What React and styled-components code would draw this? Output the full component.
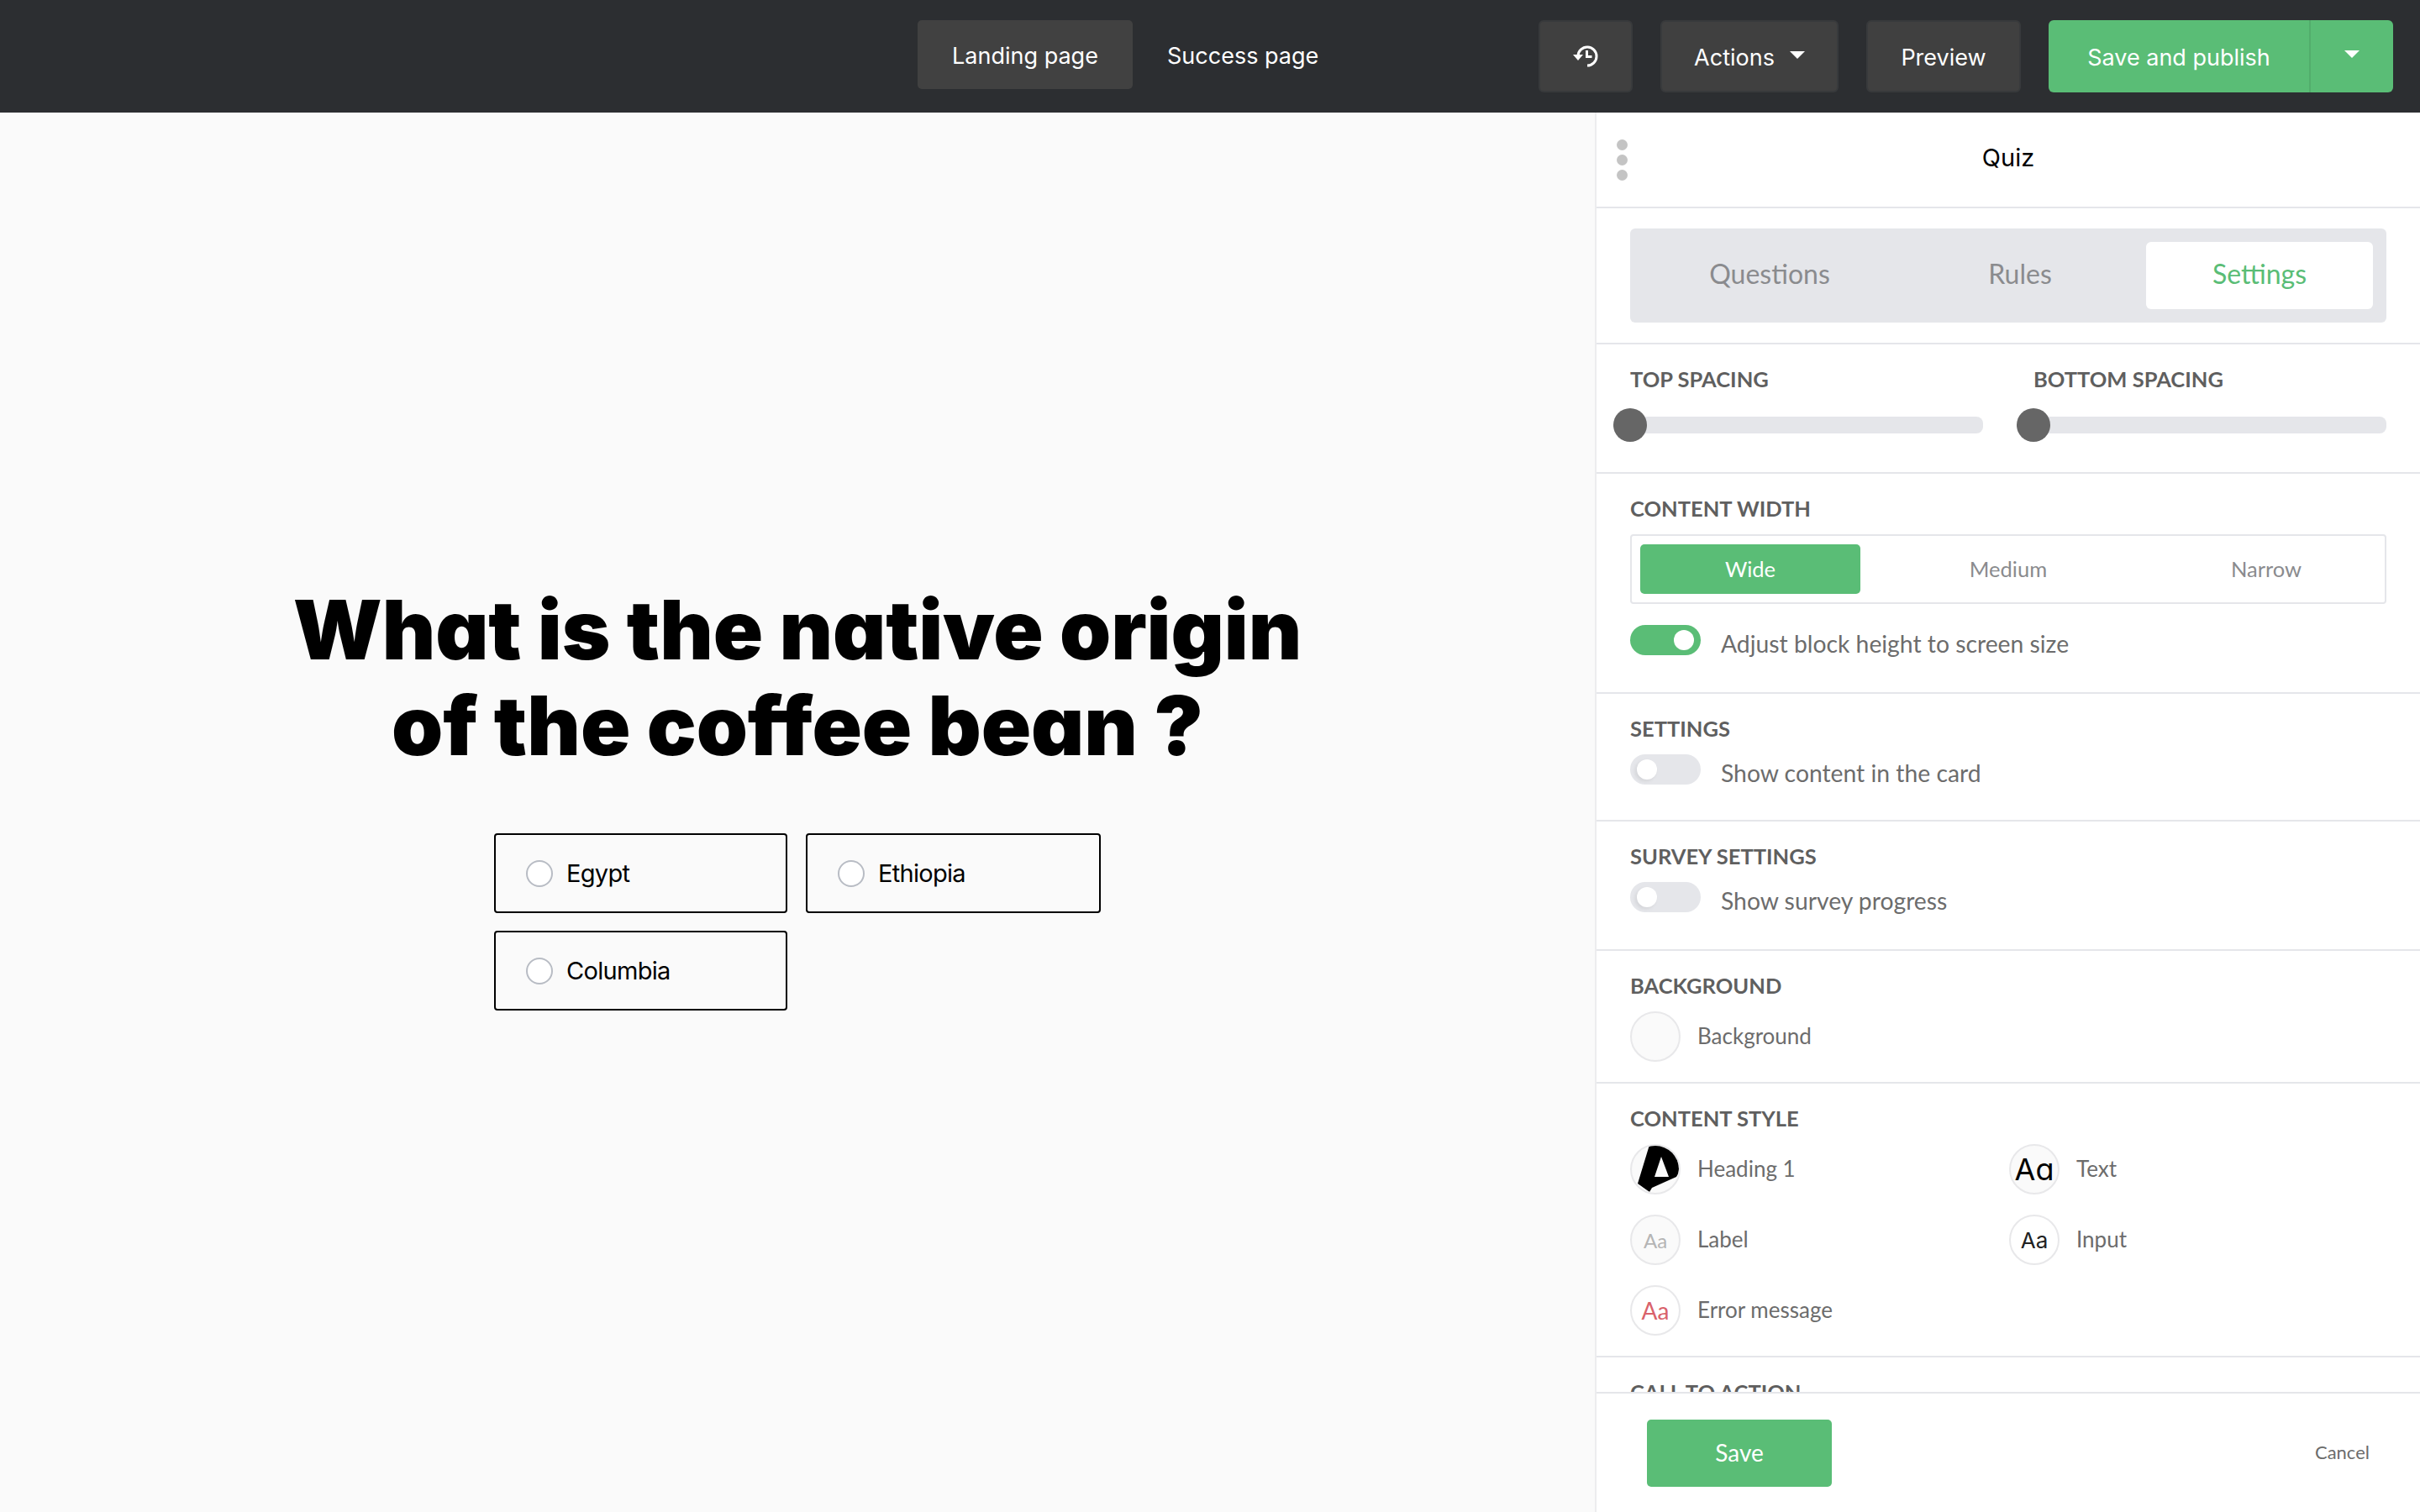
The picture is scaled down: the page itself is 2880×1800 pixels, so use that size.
import React from 'react'
import styled, { createGlobalStyle } from 'styled-components'

const GlobalStyle = createGlobalStyle`
  html, body { margin: 0; padding: 0; background: #fafafa; }
  * { box-sizing: border-box; }
`

const Page = styled.div`
  width: 2880px;
  height: 1800px;
  display: flex;
  flex-direction: column;
  overflow: hidden;
  font-family: Inter, "Liberation Sans", sans-serif;
`

const TopBar = styled.header`
  height: 134px;
  flex: none;
  background: #2c2e31;
  display: flex;
  padding: 24px 32px 0 1092px;
  color: #fff;
`

const PageTabs = styled.nav`
  display: flex;
  gap: 10px;
  margin-right: auto;
`

const PageTab = styled.div`
  width: ${(p) => (p.$active ? '256px' : '220px')};
  height: 82px;
  border-radius: 5px;
  background: ${(p) => (p.$active ? '#414141' : 'transparent')};
  display: flex;
  align-items: center;
  justify-content: ${(p) => (p.$active ? 'center' : 'flex-start')};
  padding: 3px 0 0 ${(p) => (p.$active ? '0' : '31px')};
  font-size: 27px;
`

const BarActions = styled.div`
  display: flex;
  gap: 33px;
`

const DarkButton = styled.div`
  width: ${(p) => p.$w}px;
  height: 86px;
  border-radius: 6px;
  background: #404040;
  border: 2px solid #383a3c;
  display: flex;
  align-items: center;
  justify-content: center;
  gap: 18px;
  padding-top: 2px;
  font-size: 27px;
`

const Caret = styled.span`
  width: 0;
  height: 0;
  border-left: 9px solid transparent;
  border-right: 9px solid transparent;
  border-top: 9px solid #fff;
  margin-bottom: 6px;
`

const PublishButton = styled.div`
  width: 410px;
  height: 86px;
  border-radius: 6px;
  background: #5abd76;
  display: flex;
  font-size: 27px;
`

const PublishLabel = styled.div`
  width: 312px;
  display: flex;
  align-items: center;
  justify-content: center;
  border-right: 2px solid #52ad6c;
  padding-top: 2px;
`

const PublishCaret = styled.div`
  flex: 1;
  display: flex;
  align-items: center;
  justify-content: center;
`

const Body = styled.div`
  flex: 1;
  display: flex;
  min-height: 0;
`

const Canvas = styled.main`
  flex: 1;
  background: #fafafa;
  display: flex;
  flex-direction: column;
  align-items: center;
  padding-top: 559px;
`

const Question = styled.h1`
  margin: 0;
  font-family: Inter, sans-serif;
  font-weight: 900;
  font-size: 98px;
  line-height: 114px;
  color: #000;
  text-align: center;
  letter-spacing: -0.1px;
  font-feature-settings: 'cv11';
`

const Options = styled.div`
  display: grid;
  grid-template-columns: 349px 351px;
  gap: 21px 22px;
  margin-top: 71px;
`

const Option = styled.div`
  height: 95px;
  border: 2px solid #000;
  border-radius: 4px;
  display: flex;
  align-items: center;
  gap: 16px;
  padding-left: 36px;
  font-size: 29px;
  letter-spacing: -0.7px;
  color: #000;
`

const Radio = styled.span`
  width: 32px;
  height: 32px;
  border-radius: 50%;
  border: 2px solid #b8bcc4;
  background: #fff;
`

const Panel = styled.aside`
  width: 982px;
  flex: none;
  background: #fff;
  border-left: 2px solid #ececee;
  display: flex;
  flex-direction: column;
  font-family: Lato, "Open Sans", sans-serif;
  min-height: 0;
`

const PanelHead = styled.div`
  height: 114px;
  flex: none;
  position: relative;
  display: flex;
  align-items: center;
  justify-content: center;
  border-bottom: 2px solid #e5e6ea;
  font-family: Inter, sans-serif;
  font-size: 29px;
  color: #000;
  padding-bottom: 6px;
`

const DragDots = styled.div`
  position: absolute;
  left: 24px;
  top: 32px;
  display: flex;
  flex-direction: column;
  gap: 5px;

  span {
    width: 13px;
    height: 13px;
    border-radius: 50%;
    background: #c4c4c4;
  }
`

const PanelScroll = styled.div`
  flex: 1;
  min-height: 0;
  overflow: hidden;
`

const Section = styled.section`
  padding: ${(p) => p.$top ?? 27}px 40px ${(p) => p.$bottom ?? 24}px 40px;
  border-bottom: 2px solid #e5e6ea;
`

const ModeTabs = styled.div`
  height: 112px;
  background: #e5e6ea;
  border-radius: 6px;
  display: grid;
  grid-template-columns: 332px 264px 288px;
  align-items: center;
  font-size: 32px;
`

const ModeTab = styled.div`
  height: 80px;
  border-radius: 6px;
  display: flex;
  align-items: center;
  justify-content: center;
  padding-bottom: 6px;
  color: ${(p) => (p.$active ? '#5abd76' : '#8a8b8e')};
  background: ${(p) => (p.$active ? '#fff' : 'transparent')};
  margin-left: ${(p) => (p.$active ? '18px' : '0')};
`

const Label = styled.div`
  font-size: 25.5px;
  font-weight: 700;
  line-height: 28px;
  color: #5f5f5f;
  text-transform: uppercase;
`

const SliderRow = styled.div`
  display: grid;
  grid-template-columns: 420px 420px;
  gap: 60px;
`

const SliderTrack = styled.div`
  height: 20px;
  margin: 31px 0 10px;
  background: #e5e6ea;
  border-radius: 8px;
  position: relative;
`

const SliderThumb = styled.span`
  position: absolute;
  left: -20px;
  top: -10px;
  width: 40px;
  height: 40px;
  border-radius: 50%;
  background: #666;
`

const Segments = styled.div`
  height: 83px;
  margin-top: 17px;
  border: 2px solid #e5e6ea;
  border-radius: 4px;
  display: grid;
  grid-template-columns: repeat(3, 1fr);
  gap: 45px;
  padding: 10px;
  font-size: 25.5px;
`

const Segment = styled.div`
  border-radius: 5px;
  display: flex;
  align-items: center;
  justify-content: center;
  padding-bottom: 2px;
  color: ${(p) => (p.$active ? '#fff' : '#8a8b8e')};
  background: ${(p) => (p.$active ? '#5abd76' : 'transparent')};
`

const ToggleRow = styled.div`
  display: flex;
  align-items: flex-start;
  gap: 24px;
  margin-top: ${(p) => p.$mt}px;
  font-size: 28.3px;
  color: #6c6c6c;
`

const ToggleText = styled.span`
  line-height: 36px;
  margin-top: 4px;
`

const Toggle = styled.span`
  width: 84px;
  height: 36px;
  flex: none;
  border-radius: 18px;
  background: ${(p) => (p.$on ? '#5abd76' : '#e5e6ea')};
  position: relative;

  &::after {
    content: '';
    position: absolute;
    top: 6px;
    ${(p) => (p.$on ? 'right: 8px;' : 'left: 8px;')}
    width: 24px;
    height: 24px;
    border-radius: 50%;
    background: #fff;
    box-shadow: ${(p) => (p.$on ? 'none' : '-2px 2px 4px rgba(0, 0, 0, 0.08)')};
  }
`

const SwatchGrid = styled.div`
  display: grid;
  grid-template-columns: 451px 1fr;
  row-gap: 24px;
  margin-top: 17px;
`

const SwatchItem = styled.div`
  display: flex;
  align-items: center;
  gap: 20px;
  font-size: 26px;
  color: #6c6c6c;
  ${(p) => p.$spaced && 'margin-top: 17px;'}
`

const SwatchName = styled.span`
  padding-bottom: 3px;
`

const Swatch = styled.div`
  width: 60px;
  height: 60px;
  flex: none;
  border-radius: 50%;
  border: 2px solid #e8e8ea;
  background: ${(p) => p.$bg || '#fff'};
  color: ${(p) => p.$color || '#000'};
  font-size: ${(p) => p.$size || 26}px;
  font-family: ${(p) => p.$font || 'Lato, sans-serif'};
  font-feature-settings: ${(p) => (p.$round ? "'cv11'" : 'normal')};
  display: flex;
  align-items: center;
  justify-content: center;
  position: relative;
  overflow: hidden;
`

const PanelFoot = styled.footer`
  height: 143px;
  flex: none;
  background: #fff;
  border-top: 2px solid #e5e6ea;
  display: flex;
  align-items: center;
  justify-content: space-between;
  padding: 0 60px;
`

const SaveButton = styled.div`
  width: 220px;
  height: 80px;
  border-radius: 5px;
  background: #5abd76;
  color: #fff;
  font-size: 28px;
  display: flex;
  align-items: center;
  justify-content: center;
  padding-bottom: 2px;
`

const CancelLink = styled.div`
  font-size: 22px;
  color: #6c6c6c;
  padding-bottom: 2px;
`

const IconSvg = styled.svg`
  margin-bottom: 3px;
`

const HistoryIcon = () => (
  <IconSvg width="30" height="26" viewBox="0 0 30 26" fill="none" stroke="#fff" strokeWidth="3">
    <path d="M6 12.5A11 11 0 1 1 17 24" />
    <path d="M0 11h12l-6 7z" fill="#fff" stroke="none" />
    <path d="M16.5 6v7.5h6" />
  </IconSvg>
)

const GlyphLayer = styled.svg`
  position: absolute;
  left: -2px;
  top: -2px;
`

const HeadingGlyph = () => (
  <GlyphLayer width="60" height="60" viewBox="0 0 60 60">
    <path
      fillRule="evenodd"
      d="M23 1 H32 C47 1 58 13 58 29 C58 33 57 36 55 39 L26 52 L23 57 L9 47 Z M37 15 L29 39 H46 Z"
      fill="#000"
    />
  </GlyphLayer>
)

const App = () => (
  <Page>
    <GlobalStyle />
    <TopBar>
      <PageTabs>
        <PageTab $active>Landing page</PageTab>
        <PageTab>Success page</PageTab>
      </PageTabs>
      <BarActions>
        <DarkButton $w={112}><HistoryIcon /></DarkButton>
        <DarkButton $w={212}>Actions <Caret /></DarkButton>
        <DarkButton $w={184}>Preview</DarkButton>
        <PublishButton>
          <PublishLabel>Save and publish</PublishLabel>
          <PublishCaret><Caret /></PublishCaret>
        </PublishButton>
      </BarActions>
    </TopBar>
    <Body>
      <Canvas>
        <Question>What is the native origin<br />of the coffee bean ?</Question>
        <Options>
          <Option><Radio />Egypt</Option>
          <Option><Radio />Ethiopia</Option>
          <Option><Radio />Columbia</Option>
        </Options>
      </Canvas>
      <Panel>
        <PanelHead>
          <DragDots><span /><span /><span /></DragDots>
          Quiz
        </PanelHead>
        <PanelScroll>
          <Section $top={24} $bottom={24}>
            <ModeTabs>
              <ModeTab>Questions</ModeTab>
              <ModeTab>Rules</ModeTab>
              <ModeTab $active>Settings</ModeTab>
            </ModeTabs>
          </Section>
          <Section $bottom={36}>
            <SliderRow>
              <div>
                <Label>Top spacing</Label>
                <SliderTrack><SliderThumb /></SliderTrack>
              </div>
              <div>
                <Label>Bottom spacing</Label>
                <SliderTrack><SliderThumb /></SliderTrack>
              </div>
            </SliderRow>
          </Section>
          <Section $bottom={40}>
            <Label>Content width</Label>
            <Segments>
              <Segment $active>Wide</Segment>
              <Segment>Medium</Segment>
              <Segment>Narrow</Segment>
            </Segments>
            <ToggleRow $mt={25}>
              <Toggle $on />
              <ToggleText>Adjust block height to screen size</ToggleText>
            </ToggleRow>
          </Section>
          <Section $bottom={38}>
            <Label>Settings</Label>
            <ToggleRow $mt={17}>
              <Toggle />
              <ToggleText>Show content in the card</ToggleText>
            </ToggleRow>
          </Section>
          <Section $bottom={40}>
            <Label>Survey settings</Label>
            <ToggleRow $mt={17}>
              <Toggle />
              <ToggleText>Show survey progress</ToggleText>
            </ToggleRow>
          </Section>
          <Section>
            <Label>Background</Label>
            <SwatchItem $spaced>
              <Swatch $bg="#fafafa" />
              <SwatchName>Background</SwatchName>
            </SwatchItem>
          </Section>
          <Section>
            <Label>Content style</Label>
            <SwatchGrid>
              <SwatchItem><Swatch $bg="#fafafa"><HeadingGlyph /></Swatch><SwatchName>Heading 1</SwatchName></SwatchItem>
              <SwatchItem><Swatch $bg="#fafafa" $size={36} $font="Inter, sans-serif" $round>Aa</Swatch><SwatchName>Text</SwatchName></SwatchItem>
              <SwatchItem><Swatch $bg="#fafafa" $color="#b5b5b5" $size={24}>Aa</Swatch><SwatchName>Label</SwatchName></SwatchItem>
              <SwatchItem><Swatch $size={26} $font="Inter, sans-serif" $color="#222">Aa</Swatch><SwatchName>Input</SwatchName></SwatchItem>
              <SwatchItem><Swatch $color="#d9626b" $size={28}>Aa</Swatch><SwatchName>Error message</SwatchName></SwatchItem>
            </SwatchGrid>
          </Section>
          <Section>
            <Label>Call to action</Label>
          </Section>
        </PanelScroll>
        <PanelFoot>
          <SaveButton>Save</SaveButton>
          <CancelLink>Cancel</CancelLink>
        </PanelFoot>
      </Panel>
    </Body>
  </Page>
)

export default App
